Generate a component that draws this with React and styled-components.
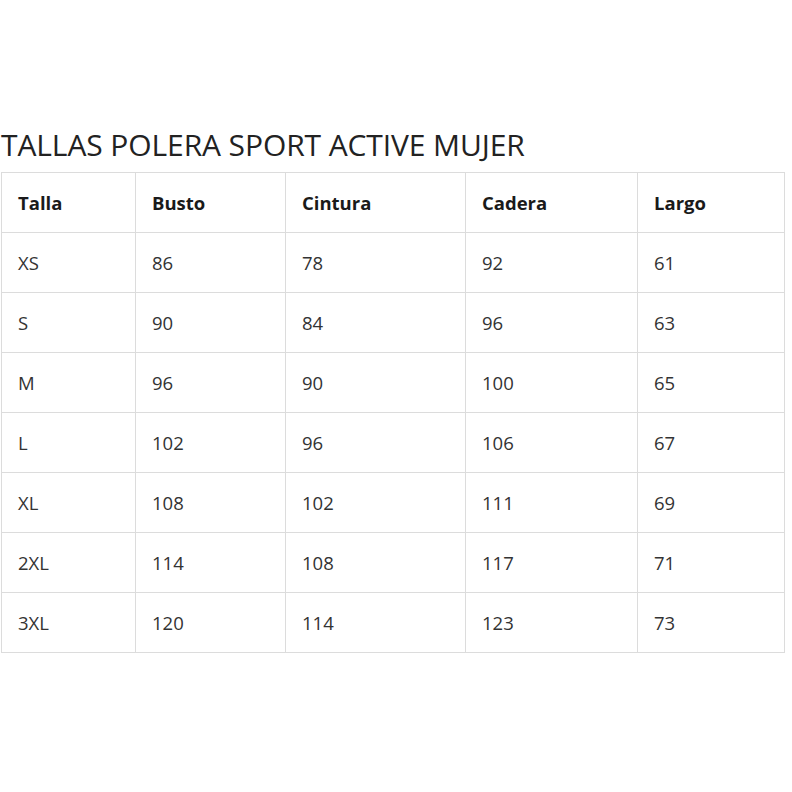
import React from "react";
import styled, { createGlobalStyle } from "styled-components";

const GlobalStyle = createGlobalStyle`
  html, body {
    margin: 0;
    padding: 0;
    background: #fff;
  }
  body {
    font-family: "Open Sans", "Noto Sans", sans-serif;
    color: #333;
  }
`;

const Page = styled.div`
  width: 792px;
  height: 792px;
  padding: 124px 0 0 1px;
  box-sizing: border-box;
`;

const Title = styled.h2`
  margin: 0 0 6px 0;
  font-size: 30px;
  line-height: 42px;
  font-weight: 400;
  color: #222;
  letter-spacing: -0.1px;
`;

const Table = styled.table`
  border-collapse: collapse;
  table-layout: fixed;
  width: 783px;
`;

const Cell = styled.td`
  border: 1px solid #dcdcdc;
  height: 60px;
  padding: 0 15px 0 16px;
  box-sizing: border-box;
  font-size: 18.5px;
  color: #333;
  vertical-align: middle;
  text-align: left;
`;

const HeadCell = styled(Cell).attrs({ as: "th" })`
  font-weight: 700;
  color: #1a1a1a;
`;

const widths = [134, 150, 180, 172, 147];
const headers = ["Talla", "Busto", "Cintura", "Cadera", "Largo"];
const rows = [
  ["XS", 86, 78, 92, 61],
  ["S", 90, 84, 96, 63],
  ["M", 96, 90, 100, 65],
  ["L", 102, 96, 106, 67],
  ["XL", 108, 102, 111, 69],
  ["2XL", 114, 108, 117, 71],
  ["3XL", 120, 114, 123, 73],
];

export default function App() {
  return (
    <>
      <GlobalStyle />
      <Page>
        <Title>TALLAS POLERA SPORT ACTIVE MUJER</Title>
        <Table>
          <colgroup>
            {widths.map((w, i) => (
              <col key={i} style={{ width: w }} />
            ))}
          </colgroup>
          <thead>
            <tr>
              {headers.map((h) => (
                <HeadCell key={h}>{h}</HeadCell>
              ))}
            </tr>
          </thead>
          <tbody>
            {rows.map((r) => (
              <tr key={r[0]}>
                {r.map((v, i) => (
                  <Cell key={i}>{v}</Cell>
                ))}
              </tr>
            ))}
          </tbody>
        </Table>
      </Page>
    </>
  );
}
